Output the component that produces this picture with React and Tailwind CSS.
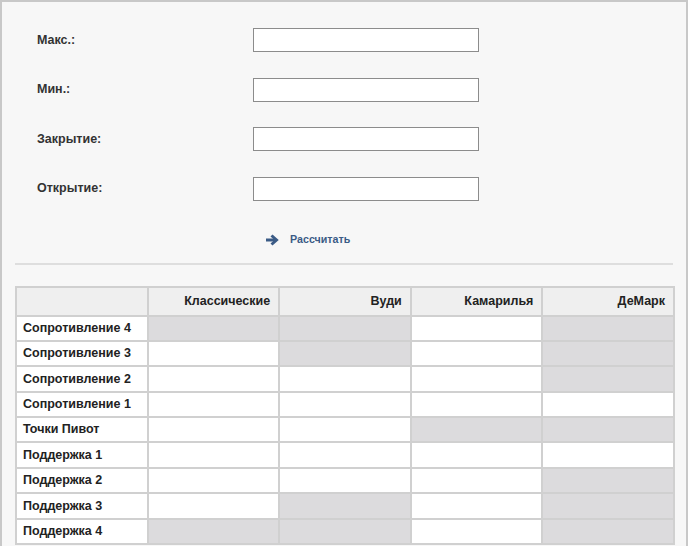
const fields = ["Макс.:", "Мин.:", "Закрытие:", "Открытие:"];

const columns = ["Классические", "Вуди", "Камарилья", "ДеМарк"];

// true = серая (недоступная) ячейка
const rows = [
    { name: "Сопротивление 4", cells: [true, true, false, true] },
    { name: "Сопротивление 3", cells: [false, true, false, true] },
    { name: "Сопротивление 2", cells: [false, false, false, true] },
    { name: "Сопротивление 1", cells: [false, false, false, false] },
    { name: "Точки Пивот", cells: [false, false, true, true] },
    { name: "Поддержка 1", cells: [false, false, false, false] },
    { name: "Поддержка 2", cells: [false, false, false, true] },
    { name: "Поддержка 3", cells: [false, true, false, true] },
    { name: "Поддержка 4", cells: [true, true, false, true] },
];

export default function App() {
    return (
        <div className="w-[689px] h-[546px] bg-white overflow-hidden" style={{ fontFamily: '"Liberation Sans", Arial, sans-serif' }}>
            <div className="w-[688px] h-[560px] border-2 border-[#c8c8c8] bg-[#f7f7f7]">
                <div className="flex flex-col gap-[25.5px] pt-[26px] pl-[35px]">
                    {fields.map((label) => (
                        <div key={label} className="flex items-center h-[24px]">
                            <label className="w-[216px] text-[12.5px] font-bold text-[#333]">{label}</label>
                            <input type="text" className="w-[226px] h-[24px] bg-white border border-[#8c8c8c] outline-none" />
                        </div>
                    ))}
                </div>

                <div className="flex items-center h-[26px] mt-[26px] ml-[263px]">
                    <svg width="14" height="12" viewBox="0 0 14 12" className="mr-[11px]">
                        <path d="M1 6 H11" stroke="#3b5b86" strokeWidth="3" />
                        <path d="M6.5 1.5 L11.5 6 L6.5 10.5" stroke="#3b5b86" strokeWidth="3" fill="none" />
                    </svg>
                    <span className="text-[10.7px] font-bold text-[#3b5b86]">Рассчитать</span>
                </div>

                <div className="mx-[13px] mt-[10px] border-t-2 border-[#dedede]" />

                <table className="table-fixed w-[660px] ml-[13px] mt-[21px] border-collapse text-[12.5px] text-[#222]">
                    <thead>
                    <tr className="h-[29px] bg-[#efefef]">
                        <th className="border-2 border-[#d0d0d0]"></th>
                        {columns.map((c) => (
                            <th key={c} className="border-2 border-[#d0d0d0] text-right pr-[8px] font-bold">{c}</th>
                        ))}
                    </tr>
                    </thead>
                    <tbody>
                    {rows.map((row) => (
                        <tr key={row.name} className="h-[25.4px]">
                            <td className="border-2 border-[#d0d0d0] bg-white pl-[6px] font-bold">{row.name}</td>
                            {row.cells.map((gray, i) => (
                                <td key={i} className={gray ? "border-2 border-[#d0d0d0] bg-[#dcdbdd]" : "border-2 border-[#d0d0d0] bg-white"}></td>
                            ))}
                        </tr>
                    ))}
                    </tbody>
                </table>
            </div>
        </div>
    );
}
